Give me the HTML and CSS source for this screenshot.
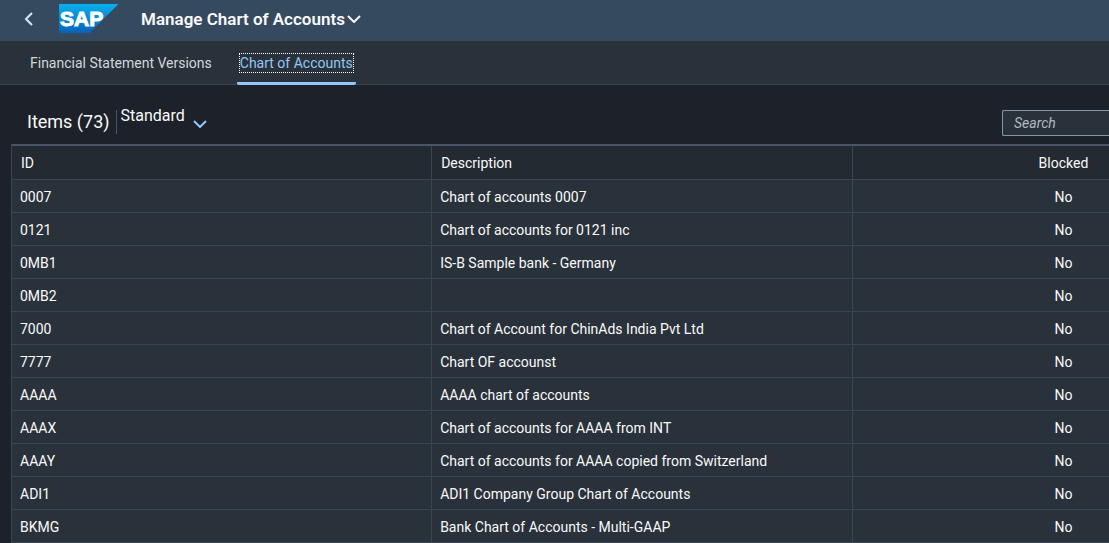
FILE: index.html
```html
<!DOCTYPE html>
<html lang="en">
<head>
<meta charset="utf-8">
<title>Manage Chart of Accounts</title>
<link rel="stylesheet" href="styles.css">
</head>
<body>
<header class="shell">
  <button class="back" type="button" aria-label="Back">
    <svg width="12" height="16" viewBox="0 0 12 16"><path d="M9 2 3 8 9 14"/></svg>
  </button>
  <a class="logo" href="#" aria-label="SAP home">
    <svg width="60" height="30" viewBox="0 0 60 30">
      <defs><linearGradient id="logo-fill" x1="0" y1="0" x2="0" y2="1"><stop offset="0" stop-color="#08b1ed"/><stop offset="1" stop-color="#0b61b8"/></linearGradient></defs>
      <path d="M0 0H59.500L30.500 29H0Z" fill="url(#logo-fill)"/>
      <text class="logo-text" x="1" y="22">SAP</text>
    </svg>
  </a>
  <button class="title" type="button">
    <span>Manage Chart of Accounts</span>
    <svg width="14" height="8" viewBox="0 0 14 8"><path d="M1 1 7 7 13 1"/></svg>
  </button>
</header>
<nav class="tabs">
  <button class="tab" type="button"><span class="tab-label">Financial Statement Versions</span></button>
  <button class="tab tab-active" type="button"><span class="tab-label">Chart of Accounts</span></button>
</nav>
<main class="content">
  <div class="toolbar">
    <h1 class="heading">Items (73)</h1>
    <button class="variant" type="button">
      <span>Standard</span>
      <svg width="14" height="8" viewBox="0 0 14 8"><path d="M1 1 7 7 13 1"/></svg>
    </button>
    <input class="search" type="search" placeholder="Search" aria-label="Search">
  </div>
  <table class="grid">
    <colgroup><col class="col-id"><col class="col-description"><col></colgroup>
    <thead><tr><th>ID</th><th>Description</th><th>Blocked</th></tr></thead>
    <tbody>
      <tr><td>0007</td><td>Chart of accounts 0007</td><td>No</td></tr>
      <tr><td>0121</td><td>Chart of accounts for 0121 inc</td><td>No</td></tr>
      <tr><td>0MB1</td><td>IS-B Sample bank - Germany</td><td>No</td></tr>
      <tr><td>0MB2</td><td></td><td>No</td></tr>
      <tr><td>7000</td><td>Chart of Account for ChinAds India Pvt Ltd</td><td>No</td></tr>
      <tr><td>7777</td><td>Chart OF accounst</td><td>No</td></tr>
      <tr><td>AAAA</td><td>AAAA chart of accounts</td><td>No</td></tr>
      <tr><td>AAAX</td><td>Chart of accounts for AAAA from INT</td><td>No</td></tr>
      <tr><td>AAAY</td><td>Chart of accounts for AAAA copied from Switzerland</td><td>No</td></tr>
      <tr><td>ADI1</td><td>ADI1 Company Group Chart of Accounts</td><td>No</td></tr>
      <tr><td>BKMG</td><td>Bank Chart of Accounts - Multi-GAAP</td><td>No</td></tr>
    </tbody>
  </table>
</main>
</body>
</html>
```
FILE: styles.css
```css
* { box-sizing: border-box; }
body {
  margin: 0;
  background: #1d2129;
  color: #fafafa;
  font: 14px/20px Roboto, "Noto Sans", sans-serif;
}
button {
  padding: 0;
  border: 0;
  background: none;
  color: inherit;
  font: inherit;
}
svg { display: block; fill: none; stroke: currentColor; }
.shell {
  display: flex;
  align-items: center;
  height: 41px;
  padding: 0 23px 3px;
  background: #354a5f;
}
.back { color: #d1e8ff; stroke-width: 2px; }
.logo { margin-left: 24px; }
.logo svg { stroke: none; }
.logo-text {
  fill: #fff;
  stroke: #fff;
  stroke-width: 1px;
  font: bold 21px "Liberation Sans", sans-serif;
}
.title {
  display: flex;
  align-items: center;
  gap: 2px;
  margin-left: 22px;
  font-size: 17px;
  font-weight: 600;
}
.title svg { stroke-width: 2px; }
.tabs {
  display: flex;
  gap: 22px;
  height: 44px;
  padding: 0 27px;
  border-bottom: 1px solid #3a4552;
  background: #29313a;
}
.tab {
  height: 44px;
  padding: 2px 3px 0;
  border-bottom: 3px solid transparent;
  color: #d3d7d9;
}
.tab-label { display: block; line-height: 18px; }
.tab-active {
  border-bottom-color: #91c8f6;
  border-radius: 2px;
  color: #91c8f6;
}
.tab-active .tab-label { outline: 1px dotted #fff; }
.content { padding-left: 11px; }
.toolbar {
  display: flex;
  align-items: center;
  height: 59px;
  padding: 17px 0 0 16px;
}
.heading { margin: 0 0 2px; font-size: 18px; font-weight: 400; }
.variant {
  display: flex;
  align-items: flex-start;
  gap: 8px;
  height: 24px;
  margin: 0 0 2px 6px;
  padding-left: 4px;
  border-left: 1px solid #475566;
  font-size: 16px;
  line-height: 12px;
}
.variant svg { align-self: flex-end; margin-bottom: 6px; color: #91c8f6; stroke-width: 2px; }
.search {
  width: 107px;
  height: 26px;
  margin: 0 0 0 auto;
  padding: 0 11px;
  border: 1px solid #8696a9;
  border-right: 0;
  border-radius: 2px 0 0 2px;
  background: #29313a;
  color: #fafafa;
  font: inherit;
}
.search::placeholder { color: #b4bac0; font-style: italic; opacity: 1; }
.grid {
  width: 100%;
  table-layout: fixed;
  border-spacing: 0;
  border-top: 2px solid #475566;
  border-left: 1px solid #3a4552;
}
.col-id { width: 38.300%; }
.col-description { width: 38.400%; }
.grid th, .grid td {
  padding: 2px 8px 0;
  border-right: 1px solid #3a4552;
  border-bottom: 1px solid #3a4552;
  background: #29313a;
  text-align: left;
}
.grid td { height: 33px; }
.grid th { height: 34px; padding: 0 9px; background: #232a31; font-weight: 400; }
.grid th:last-child, .grid td:last-child {
  padding-right: 0;
  padding-left: 15%;
  border-right: 0;
  text-align: center;
}
```
